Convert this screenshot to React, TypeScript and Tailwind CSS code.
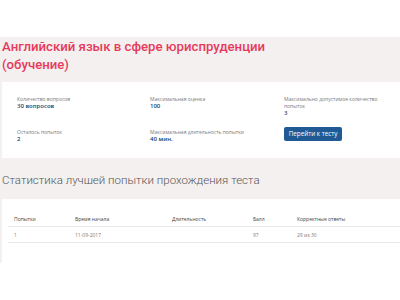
export default function App() {
  const font = { fontFamily: "'Open Sans', 'Liberation Sans', sans-serif" };
  const roboto = { fontFamily: "Roboto, 'Liberation Sans', sans-serif" };
  return (
    <div className="w-[400px] h-[300px] bg-white overflow-hidden" style={font}>
      <div className="h-[37px]" />
      <div className="bg-[#f3f0ef] pl-[2px]">
        <h1 className="pt-[1px] w-[320px] text-[13.2px] leading-[18px] font-medium text-[#e83a5c]" style={roboto}>
          Английский язык в сфере юриспруденции (обучение)
        </h1>
        <div className="mt-[8px] bg-white pl-[15px] pt-[14px] pb-[15px]">
          <div className="grid grid-cols-[133px_134px_1fr] gap-y-[10px] text-[5px] leading-[7px]">
            <div>
              <div className="text-[#7a7a7a]">Количество вопросов</div>
              <div className="text-[6px] font-semibold text-[#24466e]">30 вопросов</div>
            </div>
            <div>
              <div className="text-[#7a7a7a]">Максимальная оценка</div>
              <div className="text-[6px] font-semibold text-[#24466e]">100</div>
            </div>
            <div>
              <div className="text-[#7a7a7a] w-[100px]">Максимально допустимое количество попыток</div>
              <div className="text-[6px] font-semibold text-[#24466e]">3</div>
            </div>
            <div className="pt-[2px]">
              <div className="text-[#7a7a7a]">Осталось попыток</div>
              <div className="text-[6px] font-semibold text-[#24466e]">2</div>
            </div>
            <div className="pt-[2px]">
              <div className="text-[#7a7a7a]">Максимальная длительность попытки</div>
              <div className="text-[6px] font-semibold text-[#24466e]">40 мин.</div>
            </div>
            <div>
              <button className="w-[58px] h-[14px] rounded-[2px] bg-[#1f5a94] text-white text-[6.3px] leading-[14px] text-center">
                Перейти к тесту
              </button>
            </div>
          </div>
        </div>
        <h2 className="mt-[14px] text-[11.5px] leading-[16px] font-light text-[#555555]" style={roboto}>
          Статистика лучшей попытки прохождения теста
        </h2>
        <div className="mt-[11px] bg-white pl-[6px] pb-[20px]">
          <div className="grid grid-cols-[61px_97px_81px_44px_1fr] text-[5px]">
            <div className="pl-[6px] pt-[17px] h-[28px] leading-[6px] text-[#444444] border-b border-[#e8e8e8]">Попытки</div>
            <div className="pl-[6px] pt-[17px] h-[28px] leading-[6px] text-[#444444] border-b border-[#e8e8e8]">Время начала</div>
            <div className="pl-[6px] pt-[17px] h-[28px] leading-[6px] text-[#444444] border-b border-[#e8e8e8]">Длительность</div>
            <div className="pl-[6px] pt-[17px] h-[28px] leading-[6px] text-[#444444] border-b border-[#e8e8e8]">Балл</div>
            <div className="pl-[6px] pt-[17px] h-[28px] leading-[6px] text-[#444444] border-b border-[#e8e8e8]">Корректные ответы</div>
            <div className="pl-[6px] h-[16px] leading-[16px] text-[#7a7a7a] border-b border-[#e8e8e8]">1</div>
            <div className="pl-[6px] h-[16px] leading-[16px] text-[#7a7a7a] border-b border-[#e8e8e8]">11-09-2017</div>
            <div className="pl-[6px] h-[16px] leading-[16px] text-[#7a7a7a] border-b border-[#e8e8e8]"></div>
            <div className="pl-[6px] h-[16px] leading-[16px] text-[#7a7a7a] border-b border-[#e8e8e8]">97</div>
            <div className="pl-[6px] h-[16px] leading-[16px] text-[#7a7a7a] border-b border-[#e8e8e8]">29 из 30</div>
          </div>
        </div>
      </div>
    </div>
  );
}
